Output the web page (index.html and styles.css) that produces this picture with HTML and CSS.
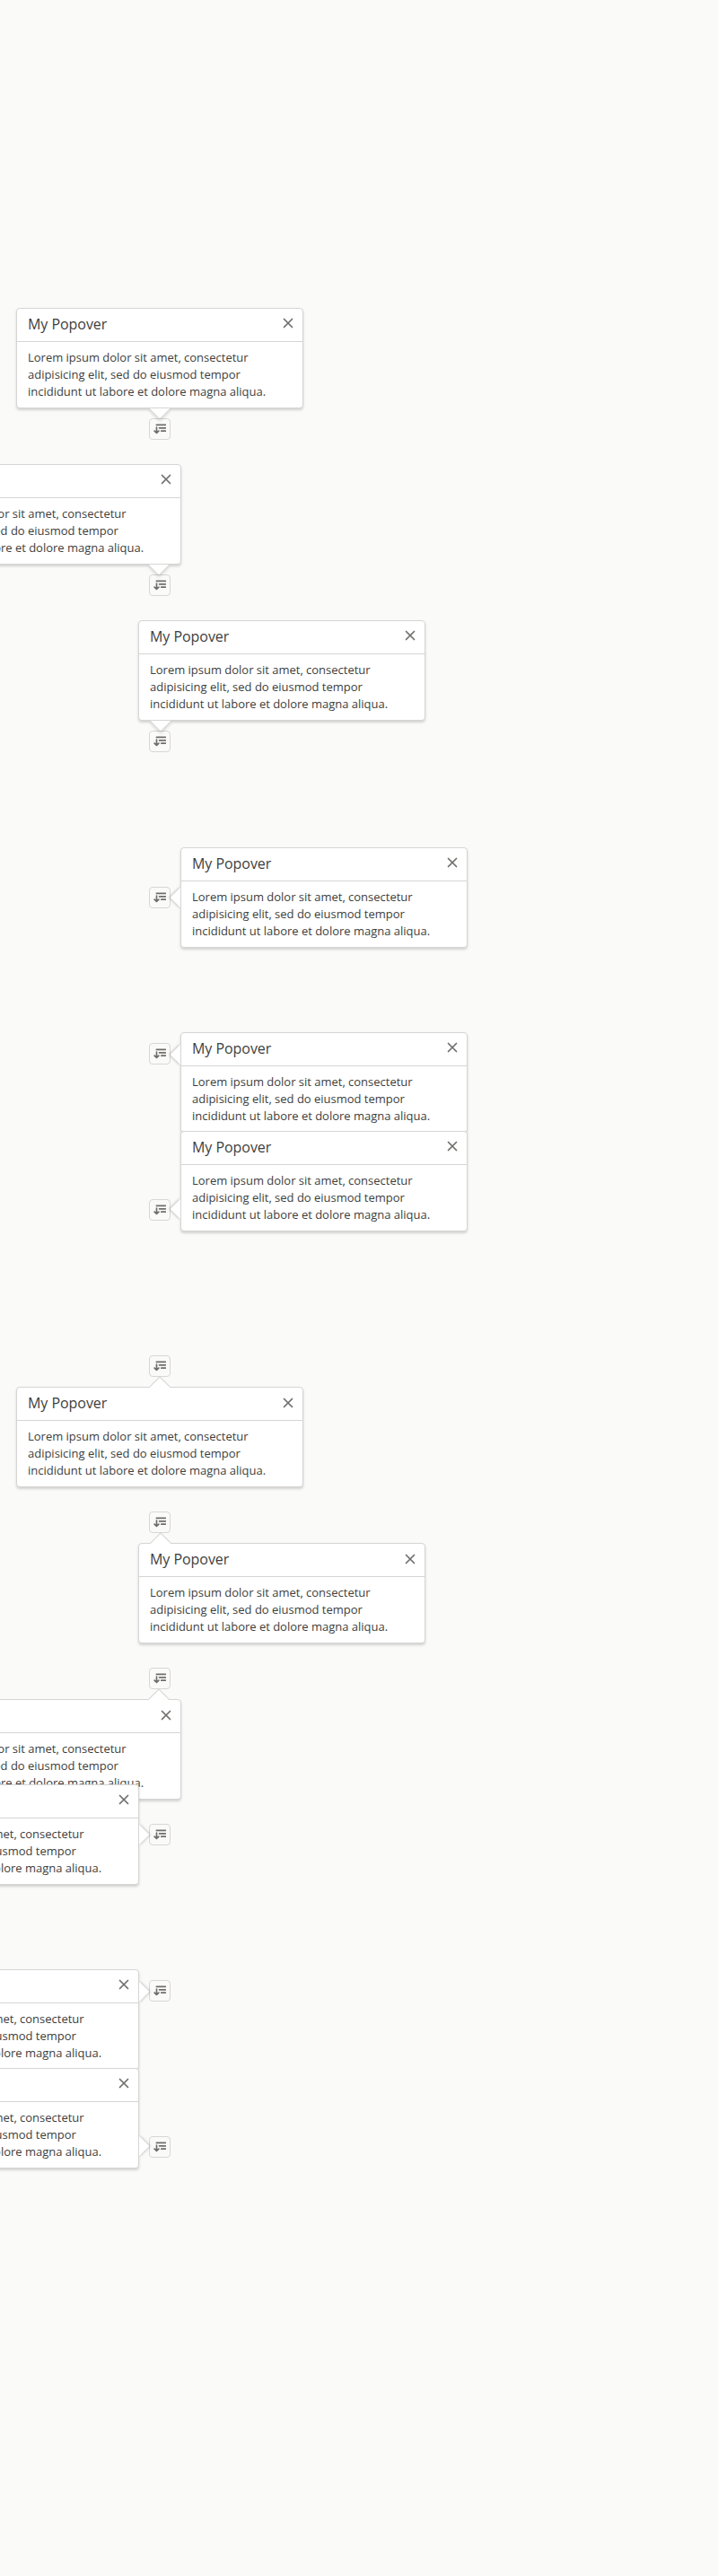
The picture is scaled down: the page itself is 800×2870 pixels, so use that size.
FILE: index.html
```
<!DOCTYPE html>
<html lang="en">
<head>
<meta charset="utf-8">
<title>Popovers</title>
<link rel="stylesheet" href="styles.css">
</head>
<body>
<svg class="defs" aria-hidden="true">
  <symbol id="sort" viewBox="0 0 14 14">
    <path d="M3.4 2.4H13.4M6.6 5.8H13.4M8.8 9.2H13.4" stroke-width="1.7" stroke-linecap="round"/>
    <path d="M3.5 5.2V11M1.1 9.1L3.5 11.3L5.9 9.1" stroke-width="1.7" stroke-linecap="round" stroke-linejoin="round"/>
  </symbol>
  <symbol id="close" viewBox="0 0 12 12">
    <path d="M1.5 1.5L10.5 10.5M10.5 1.5L1.5 10.5" stroke-width="1.7" stroke-linecap="round"/>
  </symbol>
</svg>
<main class="list" id="list"></main>
<template id="item">
  <div class="item">
    <button class="trigger" aria-label="Sort"><svg class="sort"><use href="#sort"/></svg></button>
    <section class="popover">
      <span class="nubbin"></span>
      <header class="header"><h2 class="title">My Popover</h2></header>
      <button class="close" aria-label="Close"><svg class="cross"><use href="#close"/></svg></button>
      <div class="body"><p class="line">Lorem ipsum dolor sit amet, consectetur</p><p class="line">adipisicing elit, sed do eiusmod tempor</p><p class="line">incididunt ut labore et dolore magna aliqua.</p></div>
    </section>
  </div>
</template>
<script src="popovers.js"></script>
</body>
</html>
```
FILE: popovers.js
```
const placements = [
  "bottom", "bottom-right", "bottom-left",
  "left", "left-top", "left-bottom",
  "top", "top-left", "top-right",
  "right", "right-top", "right-bottom"
];
const list = document.getElementById("list");
const template = document.getElementById("item");
for (const placement of placements) {
  const item = template.content.cloneNode(true);
  item.querySelector(".popover").classList.add("nub-" + placement);
  list.append(item);
}
```
FILE: styles.css
```
* { box-sizing: border-box; }
body {
  margin: 0;
  min-height: 2870px;
  background: #fafaf9;
  color: #3e3e3c;
  font: 13px/19px "Open Sans", "Noto Sans", sans-serif;
  overflow-x: hidden;
}
.defs { position: absolute; width: 0; height: 0; }
.list {
  display: flex;
  flex-direction: column;
  gap: 150px;
  padding: 466px 0 466px 166px;
}
.item { position: relative; width: 24px; height: 24px; }
.trigger {
  display: flex;
  align-items: center;
  justify-content: center;
  width: 24px;
  height: 24px;
  padding: 0;
  border: 1px solid #d8d7d6;
  border-radius: 4px;
  background: transparent;
}
.sort { width: 14px; height: 14px; fill: none; stroke: #706e6b; }
.popover {
  position: absolute;
  width: 320px;
  height: 112px;
  border: 1px solid #d6d5d4;
  border-radius: 4px;
  background: #fff;
  box-shadow: 0 2px 3px rgba(0, 0, 0, 0.16);
}
.header {
  position: relative;
  height: 37px;
  padding: 7px 12px 8px;
  border-bottom: 1px solid #d6d5d4;
}
.title {
  width: max-content;
  margin: 0;
  font-size: 16px;
  font-weight: 400;
  line-height: 20px;
  letter-spacing: -0.05px;
}
.body { position: relative; padding: 8px 12px; }
.line { margin: 0; width: max-content; white-space: nowrap; letter-spacing: -0.012px; }
.close {
  position: absolute;
  top: 10px;
  right: 10px;
  display: flex;
  padding: 0;
  border: 0;
  background: transparent;
}
.cross { width: 12px; height: 12px; fill: none; stroke: #706e6b; }
.nubbin {
  position: absolute;
  width: 16px;
  height: 16px;
  background: #fff;
  transform: rotate(45deg);
}

/* Popover sits above its trigger */
.nub-bottom, .nub-bottom-left, .nub-bottom-right { top: -123px; }
.nub-bottom .nubbin, .nub-bottom-left .nubbin, .nub-bottom-right .nubbin {
  bottom: -9px;
  box-shadow: 2px 2px 4px rgba(0, 0, 0, 0.16);
  clip-path: polygon(130% -30%, 130% 130%, -30% 130%);
}
/* Popover hangs below its trigger */
.nub-top, .nub-top-left, .nub-top-right { top: 35px; }
.nub-top .nubbin, .nub-top-left .nubbin, .nub-top-right .nubbin {
  top: -8px;
  box-shadow: -1px -1px 0 #d6d5d4;
  clip-path: polygon(-30% -30%, 130% -30%, -30% 130%);
}
.nub-top .close, .nub-top-left .close, .nub-top-right .close { top: 11px; }

.nub-bottom, .nub-top { left: -148px; }
.nub-bottom .nubbin, .nub-top .nubbin { left: 151px; }
.nub-bottom-left, .nub-top-left { left: -12px; }
.nub-bottom-left .nubbin, .nub-top-left .nubbin { left: 16px; }
.nub-bottom-right, .nub-top-right { right: -12px; }
.nub-bottom-right .nubbin, .nub-top-right .nubbin { right: 16px; }

/* Popover to the right of its trigger */
.nub-left, .nub-left-top, .nub-left-bottom { left: 35px; }
.nub-left .nubbin, .nub-left-top .nubbin, .nub-left-bottom .nubbin {
  left: -9px;
  box-shadow: -1px 1px 3px rgba(0, 0, 0, 0.22);
  clip-path: polygon(-30% -30%, 130% 130%, -30% 130%);
}
/* Popover to the left of its trigger */
.nub-right, .nub-right-top, .nub-right-bottom { right: 35px; }
.nub-right .nubbin, .nub-right-top .nubbin, .nub-right-bottom .nubbin {
  right: -9px;
  box-shadow: 1px -1px 3px rgba(0, 0, 0, 0.2);
  clip-path: polygon(-30% -30%, 130% -30%, 130% 130%);
}
.nub-left, .nub-right { top: -44px; }
.nub-left .nubbin, .nub-right .nubbin { top: 47px; }
.nub-left-top, .nub-right-top { top: -12px; }
.nub-left-top .nubbin, .nub-right-top .nubbin { top: 16px; }
.nub-left-bottom, .nub-right-bottom { bottom: -12px; }
.nub-left-bottom .nubbin, .nub-right-bottom .nubbin { bottom: 16px; }
```
